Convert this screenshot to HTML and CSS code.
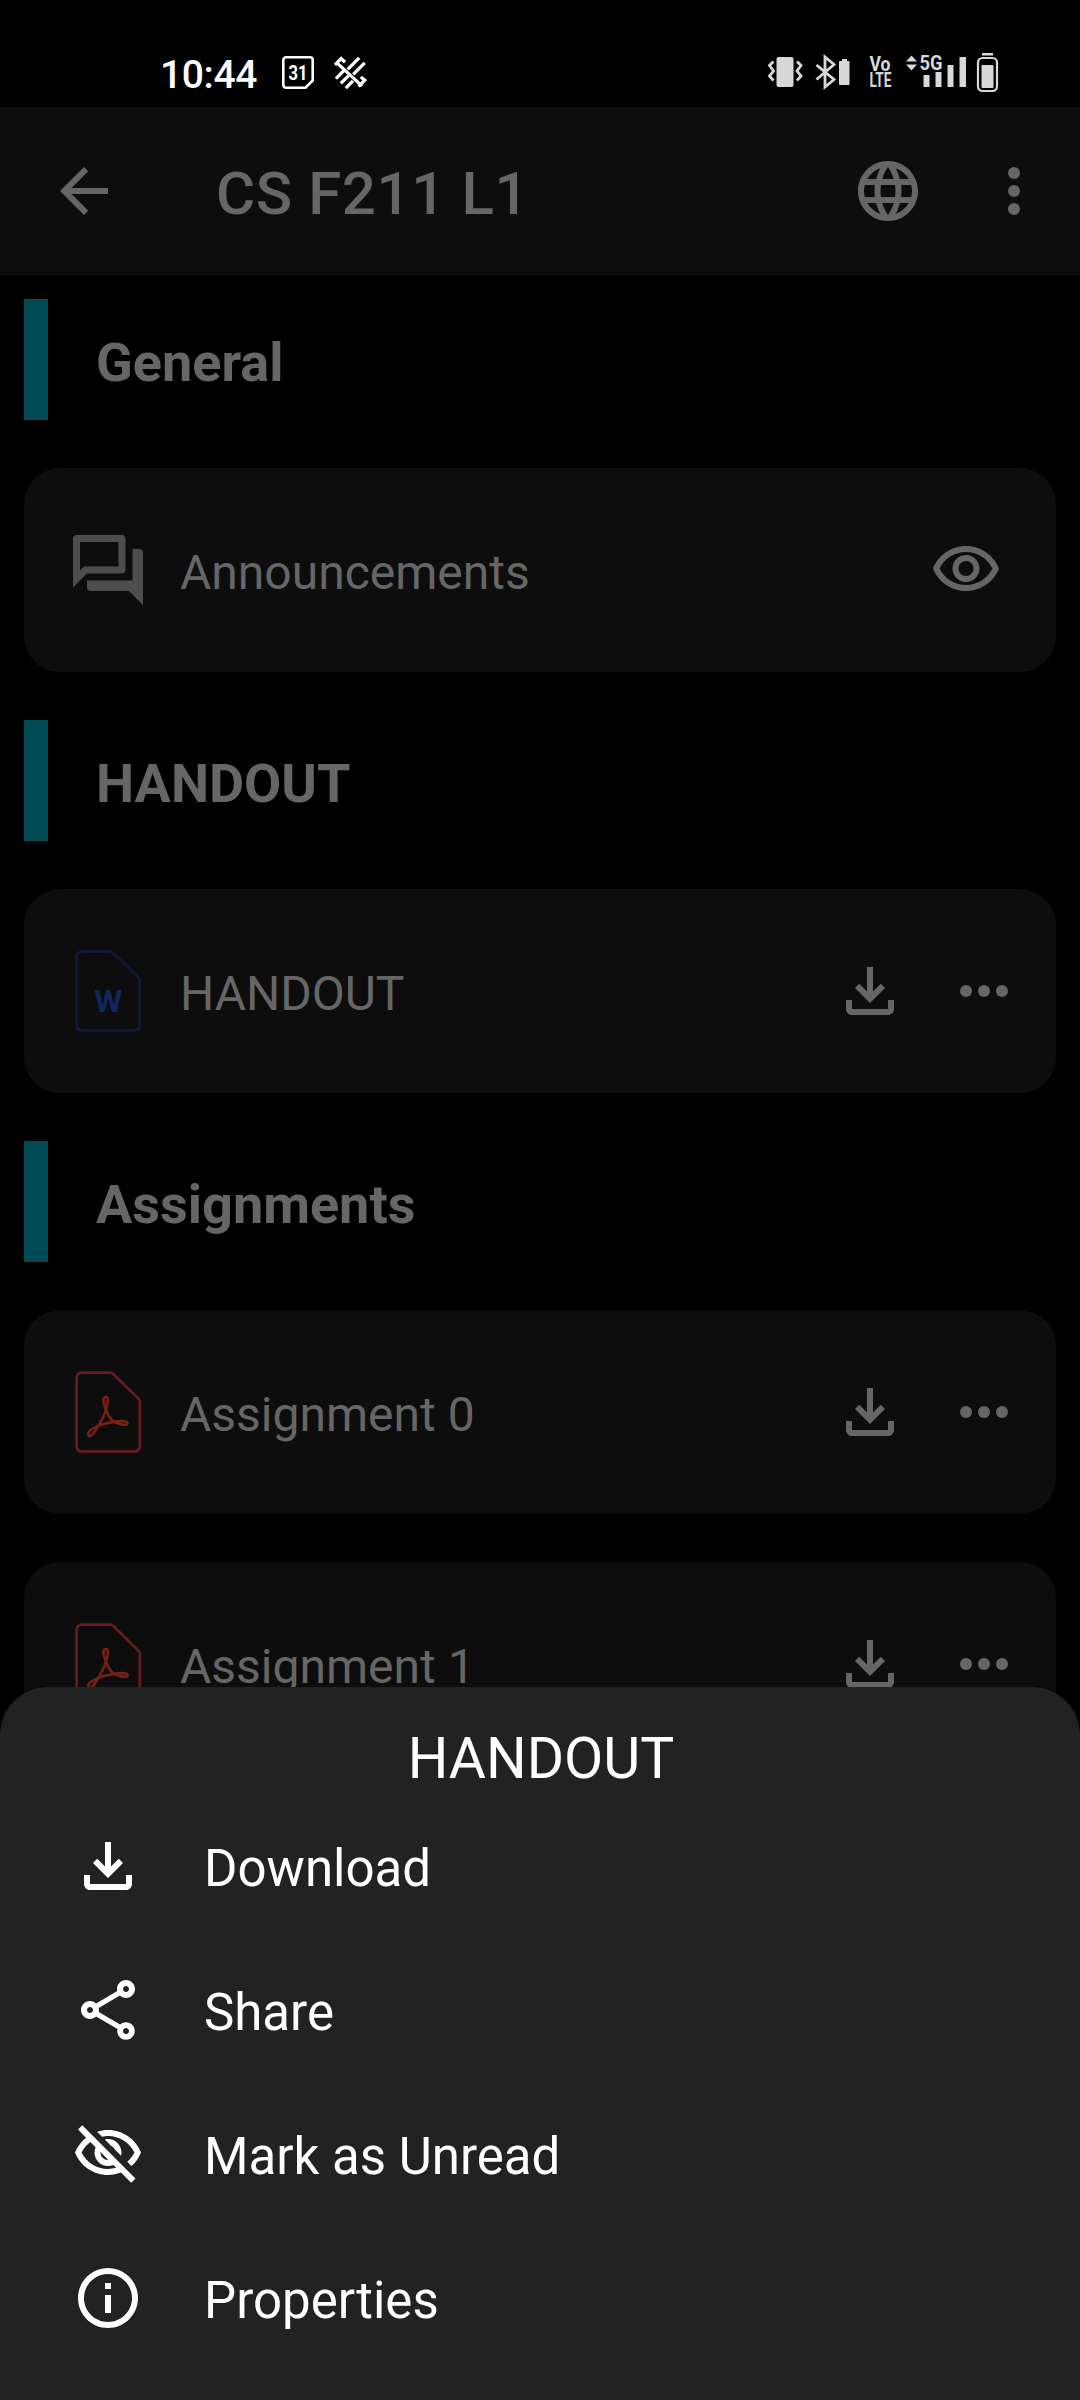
FILE: index.html
```html
<!DOCTYPE html>
<html lang="en">
<head>
<meta charset="utf-8">
<title>CS F211 L1</title>
<link rel="stylesheet" href="styles.css">
</head>
<body>
<svg class="defs" aria-hidden="true">
  <symbol id="download" viewBox="0 0 24 24"><path d="M18 15v3H6v-3H4v3c0 1.1.9 2 2 2h12c1.1 0 2-.9 2-2v-3h-2zM17 11l-1.41-1.41L13 12.17V4h-2v8.17L8.41 9.59 7 11l5 5 5-5z"/></symbol>
  <symbol id="more" viewBox="0 0 24 24"><circle cx="6" cy="12" r="2"/><circle cx="12" cy="12" r="2"/><circle cx="18" cy="12" r="2"/></symbol>
  <symbol id="pdf" viewBox="0 0 84 84">
    <path d="M15.6 2.6H44a4 4 0 0 1 3 1.2L72.400 28.600a5 5 0 0 1 1.400 3.500V76.500a5 5 0 0 1-5 5H15.600a5 5 0 0 1-5-5V7.600a5 5 0 0 1 5-5z"/>
    <path class="swirl" d="M22.700 65.700C20 61.500 29 56.500 36 54.500C44 52.200 61.500 49 61.500 53C61.500 57 50 53.500 46.500 50.500C41.500 46.500 37 33 37.500 29C38 26.500 41.500 26.500 41.700 29C42 36 38 46 34 53C30 60 25.500 68 22.700 65.700z"/>
  </symbol>
</svg>
<div class="screen">
  <div class="status">
    <div class="status-left">
      <span class="time">10:44</span>
      <svg class="cal" viewBox="0 0 32 33"><path d="M4 1.300h24a2.700 2.700 0 0 1 2.700 2.700v20.500l-7.200 7.200H4A2.700 2.700 0 0 1 1.300 29V4A2.700 2.700 0 0 1 4 1.300z"/><text x="6.500" y="23.500" textLength="19" lengthAdjust="spacingAndGlyphs">31</text></svg>
      <svg class="sat" viewBox="580 46 102 104"><path d="M585 73L604 54L616 65M591 67L668 138M657 139L676 120L664 110M659 52L624 87M676 67L641 102M588 115L613 90M603 130L626 107M618 144L640 122"/></svg>
    </div>
    <svg class="status-right" viewBox="765 50 236 46">
      <rect x="776.500" y="57" width="17" height="30" rx="2"/>
      <path class="line" d="M773.500 61.500l-4 4 4 5.500-4 5 4 4.500M797 61.500l4 4-4 5.500 4 5-4 4.500"/>
      <path class="line" d="M816.500 65L834 79.500L825 87V57L834 64.500L816.500 79.500"/>
      <path d="M842 59h5v2h1.500a1 1 0 0 1 1 1v22a1 1 0 0 1-1 1h-8.500a1 1 0 0 1-1-1V62a1 1 0 0 1 1-1h2z"/>
      <text font-size="19.500"><tspan x="869.500" y="71" textLength="21" lengthAdjust="spacingAndGlyphs">Vo</tspan><tspan x="869.500" y="86.700" textLength="22" lengthAdjust="spacingAndGlyphs">LTE</tspan></text>
      <path d="M906 61.500l5.500-6 5.500 6zM906 64.500l5.500 6 5.500-6z"/>
      <text x="919.500" y="70" font-size="20.500" textLength="23" lengthAdjust="spacingAndGlyphs">5G</text>
      <path d="M923.500 75h6v12h-6zM935.500 72h6v15h-6zM947.500 65h6v22h-6zM959.500 57h6.500v30h-6.500zM982 53h11v2.500h-11z"/>
      <rect class="frame" x="978" y="58" width="19" height="33" rx="4.500"/>
      <rect x="981.500" y="65" width="12" height="23" rx="1"/>
    </svg>
  </div>
  <header class="appbar">
    <svg class="icon" viewBox="0 0 24 24"><path d="M20 11H7.830l5.590-5.590L12 4l-8 8 8 8 1.410-1.410L7.830 13H20v-2z"/></svg>
    <h1 class="title">CS F211 L1</h1>
    <svg class="icon" viewBox="0 0 24 24"><path d="M11.990 2C6.470 2 2 6.480 2 12s4.470 10 9.990 10C17.520 22 22 17.520 22 12S17.520 2 11.990 2zm6.930 6h-2.950c-.32-1.250-.78-2.450-1.380-3.560 1.840.63 3.370 1.910 4.330 3.560zM12 4.040c.83 1.200 1.480 2.530 1.910 3.960h-3.820c.43-1.430 1.080-2.760 1.910-3.960zM4.260 14C4.100 13.360 4 12.690 4 12s.1-1.360.26-2h3.380c-.08.66-.14 1.320-.14 2s.06 1.340.14 2H4.260zm.82 2h2.950c.32 1.250.78 2.450 1.380 3.560-1.840-.63-3.370-1.900-4.330-3.560zm2.950-8H5.080c.96-1.660 2.490-2.930 4.330-3.560C8.810 5.550 8.350 6.750 8.030 8zM12 19.960c-.83-1.200-1.480-2.530-1.910-3.960h3.820c-.43 1.430-1.080 2.760-1.910 3.960zM14.340 14H9.660c-.09-.66-.16-1.320-.16-2s.07-1.350.16-2h4.680c.09.65.16 1.320.16 2s-.07 1.340-.16 2zm.25 5.560c.6-1.110 1.060-2.310 1.380-3.560h2.950c-.96 1.650-2.490 2.930-4.330 3.560zM16.360 14c.08-.66.14-1.320.14-2s-.06-1.340-.14-2h3.380c.16.640.26 1.310.26 2s-.1 1.360-.26 2h-3.380z"/></svg>
    <svg class="icon" viewBox="0 0 24 24"><circle cx="12" cy="6" r="2"/><circle cx="12" cy="12" r="2"/><circle cx="12" cy="18" r="2"/></svg>
  </header>
  <main class="list">
    <h2 class="section">General</h2>
    <div class="card card-forum">
      <svg class="type forum" viewBox="0 0 24 24"><path d="M15 4v7H5.170L4 12.170V4h11m1-2H3c-.55 0-1 .45-1 1v14l4-4h10c.55 0 1-.45 1-1V3c0-.55-.45-1-1-1zm5 4h-2v9H6v2c0 .55.45 1 1 1h11l4 4V7c0-.55-.45-1-1-1z"/></svg>
      <span class="name">Announcements</span>
      <svg class="icon" viewBox="0 0 24 24"><path d="M12 6c3.790 0 7.170 2.130 8.820 5.500C19.170 14.870 15.790 17 12 17s-7.170-2.130-8.820-5.500C4.830 8.130 8.210 6 12 6m0-2C7 4 2.730 7.110 1 11.500 2.730 15.890 7 19 12 19s9.270-3.110 11-7.500C21.270 7.110 17 4 12 4zm0 5c1.380 0 2.500 1.120 2.500 2.500S13.380 14 12 14s-2.500-1.120-2.500-2.500S10.620 9 12 9m0-2c-2.480 0-4.500 2.020-4.500 4.500S9.520 16 12 16s4.500-2.020 4.500-4.500S14.480 7 12 7z"/></svg>
    </div>
    <h2 class="section">HANDOUT</h2>
    <div class="card">
      <svg class="type word" viewBox="0 0 84 84"><path d="M15.600 2.600H44a4 4 0 0 1 3 1.200L72.400 28.600a5 5 0 0 1 1.400 3.500V76.500a5 5 0 0 1-5 5H15.600a5 5 0 0 1-5-5V7.600a5 5 0 0 1 5-5z"/><text x="42.200" y="63" text-anchor="middle">W</text></svg>
      <span class="name">HANDOUT</span>
      <svg class="icon"><use href="#download"/></svg>
      <svg class="icon"><use href="#more"/></svg>
    </div>
    <h2 class="section">Assignments</h2>
    <div class="card">
      <svg class="type pdf"><use href="#pdf"/></svg>
      <span class="name">Assignment 0</span>
      <svg class="icon"><use href="#download"/></svg>
      <svg class="icon"><use href="#more"/></svg>
    </div>
    <div class="card">
      <svg class="type pdf"><use href="#pdf"/></svg>
      <span class="name">Assignment 1</span>
      <svg class="icon"><use href="#download"/></svg>
      <svg class="icon"><use href="#more"/></svg>
    </div>
  </main>
  <section class="sheet">
    <h2 class="sheet-title">HANDOUT</h2>
    <div class="action"><svg class="icon"><use href="#download"/></svg><span>Download</span></div>
    <div class="action"><svg class="icon" viewBox="0 0 24 24"><path d="M18 16.080c-.76 0-1.440.3-1.960.77L8.910 12.700c.05-.23.09-.46.09-.7s-.04-.47-.09-.7l7.050-4.110c.54.5 1.250.81 2.040.81 1.660 0 3-1.340 3-3s-1.340-3-3-3-3 1.340-3 3c0 .24.04.47.09.7L8.040 9.810C7.500 9.310 6.790 9 6 9c-1.660 0-3 1.340-3 3s1.340 3 3 3c.79 0 1.500-.31 2.040-.81l7.120 4.160c-.05.21-.08.43-.08.65 0 1.610 1.310 2.920 2.920 2.920s2.920-1.310 2.920-2.920c0-1.610-1.310-2.920-2.920-2.920zM18 4c.55 0 1 .45 1 1s-.45 1-1 1-1-.45-1-1 .45-1 1-1zM6 13c-.55 0-1-.45-1-1s.45-1 1-1 1 .45 1 1-.45 1-1 1zm12 7.020c-.55 0-1-.45-1-1s.45-1 1-1 1 .45 1 1-.45 1-1 1z"/></svg><span>Share</span></div>
    <div class="action"><svg class="icon" viewBox="0 0 24 24"><path d="M12 6c3.790 0 7.170 2.130 8.820 5.500-.59 1.220-1.420 2.270-2.410 3.120l1.410 1.410c1.390-1.230 2.490-2.770 3.180-4.530C21.270 7.110 17 4 12 4c-1.270 0-2.490.2-3.640.57l1.650 1.650C10.660 6.090 11.320 6 12 6zm-1.070 1.140L13 9.210c.57.25 1.030.71 1.280 1.280l2.070 2.070c.08-.34.14-.7.14-1.070C16.500 9.010 14.480 7 12 7c-.37 0-.72.05-1.070.14zM2.010 3.870l2.680 2.680C3.060 7.830 1.770 9.530 1 11.500 2.730 15.890 7 19 12 19c1.520 0 2.980-.29 4.320-.82l3.420 3.420 1.410-1.410L3.420 2.450 2.010 3.870zm7.500 7.500l2.610 2.610c-.04.01-.08.02-.12.02-1.380 0-2.500-1.120-2.500-2.500 0-.05.01-.08.01-.13zm-3.400-3.400l1.750 1.750c-.23.55-.36 1.150-.36 1.780 0 2.480 2.020 4.500 4.500 4.500.63 0 1.230-.13 1.770-.36l.98.98c-.88.24-1.800.38-2.750.38-3.790 0-7.170-2.130-8.820-5.500.7-1.430 1.720-2.610 2.930-3.530z"/></svg><span>Mark as Unread</span></div>
    <div class="action"><svg class="icon" viewBox="0 0 24 24"><path d="M11 7h2v2h-2zm0 4h2v6h-2zm1-9C6.480 2 2 6.480 2 12s4.480 10 10 10 10-4.480 10-10S17.520 2 12 2zm0 18c-4.410 0-8-3.590-8-8s3.590-8 8-8 8 3.590 8 8-3.590 8-8 8z"/></svg><span>Properties</span></div>
  </section>
</div>
</body>
</html>
```

FILE: styles.css
```css
* { box-sizing: border-box; margin: 0; padding: 0; }
body { background: #000; font-family: Roboto, sans-serif; }
svg { display: block; flex: none; fill: currentColor; }
.defs { position: absolute; width: 0; height: 0; }
.screen { position: relative; width: 1080px; height: 2400px; overflow: hidden; background: #000; color: #666; }
.icon { width: 72px; height: 72px; }

.status { display: flex; justify-content: space-between; height: 107px; padding: 50px 79px 0 160px; }
.status-left { display: flex; align-items: flex-start; padding-top: 6px; color: #fff; }
.time { width: 122px; padding-top: 1px; font-size: 39px; font-weight: 500; line-height: 36px; letter-spacing: -0.4px; }
.cal { width: 32px; height: 33px; stroke: currentColor; stroke-width: 2.6; }
.cal path { fill: none; }
.cal text { stroke: none; font-size: 20px; font-weight: 700; }
.sat { width: 34px; height: 34px; margin-left: 19px; }
.sat path { fill: none; stroke: currentColor; stroke-width: 10; }
.status-right { width: 236px; height: 46px; color: #d8d8d8; font-weight: 700; }
.status-right .line { fill: none; stroke: currentColor; stroke-width: 2.8; }
.status-right .frame { fill: none; stroke: currentColor; stroke-width: 2.2; }

.appbar { display: flex; align-items: center; height: 168px; padding: 0 30px 0 48px; background: #0d0d0d; }
.title { flex: 1; padding: 5px 0 0 96px; font-size: 60px; font-weight: 500; line-height: 70px; letter-spacing: 0.6px; }
.appbar .title + .icon { margin-right: 54px; }

.list { display: flex; flex-direction: column; gap: 48px; padding: 24px; }
.section { height: 121px; padding: 6px 0 0 48px; border-left: 24px solid #004a54; font-size: 54px; font-weight: 700; line-height: 115px; }
.card { display: flex; align-items: center; height: 204px; padding: 0 36px 0 42px; border-radius: 36px; background: #0d0d0d; }
.card-forum { padding-right: 54px; }
.type { width: 84px; height: 84px; }
.forum { color: #4d4d4d; }
.pdf, .word { fill: none; stroke-width: 2.6; }
.pdf { stroke: #6b1c1c; }
.swirl { stroke: #7a2016; }
.word { stroke: #111840; }
.word text { fill: #10265c; stroke: none; font-size: 32px; font-weight: 700; }
.name { flex: 1; padding: 5px 0 0 30px; font-size: 48px; line-height: 56px; }
.card .icon + .icon { margin-left: 42px; }

.sheet { position: absolute; left: 0; right: 0; bottom: 0; height: 713px; border-radius: 48px 48px 0 0; background: #222; color: #fff; }
.sheet-title { height: 107px; padding: 38px 0 0 2px; text-align: center; font-size: 57px; font-weight: 400; line-height: 68px; }
.action { display: flex; align-items: center; height: 144px; padding-left: 72px; font-size: 51px; line-height: 60px; }
.action span { padding: 5px 0 0 60px; }
```
